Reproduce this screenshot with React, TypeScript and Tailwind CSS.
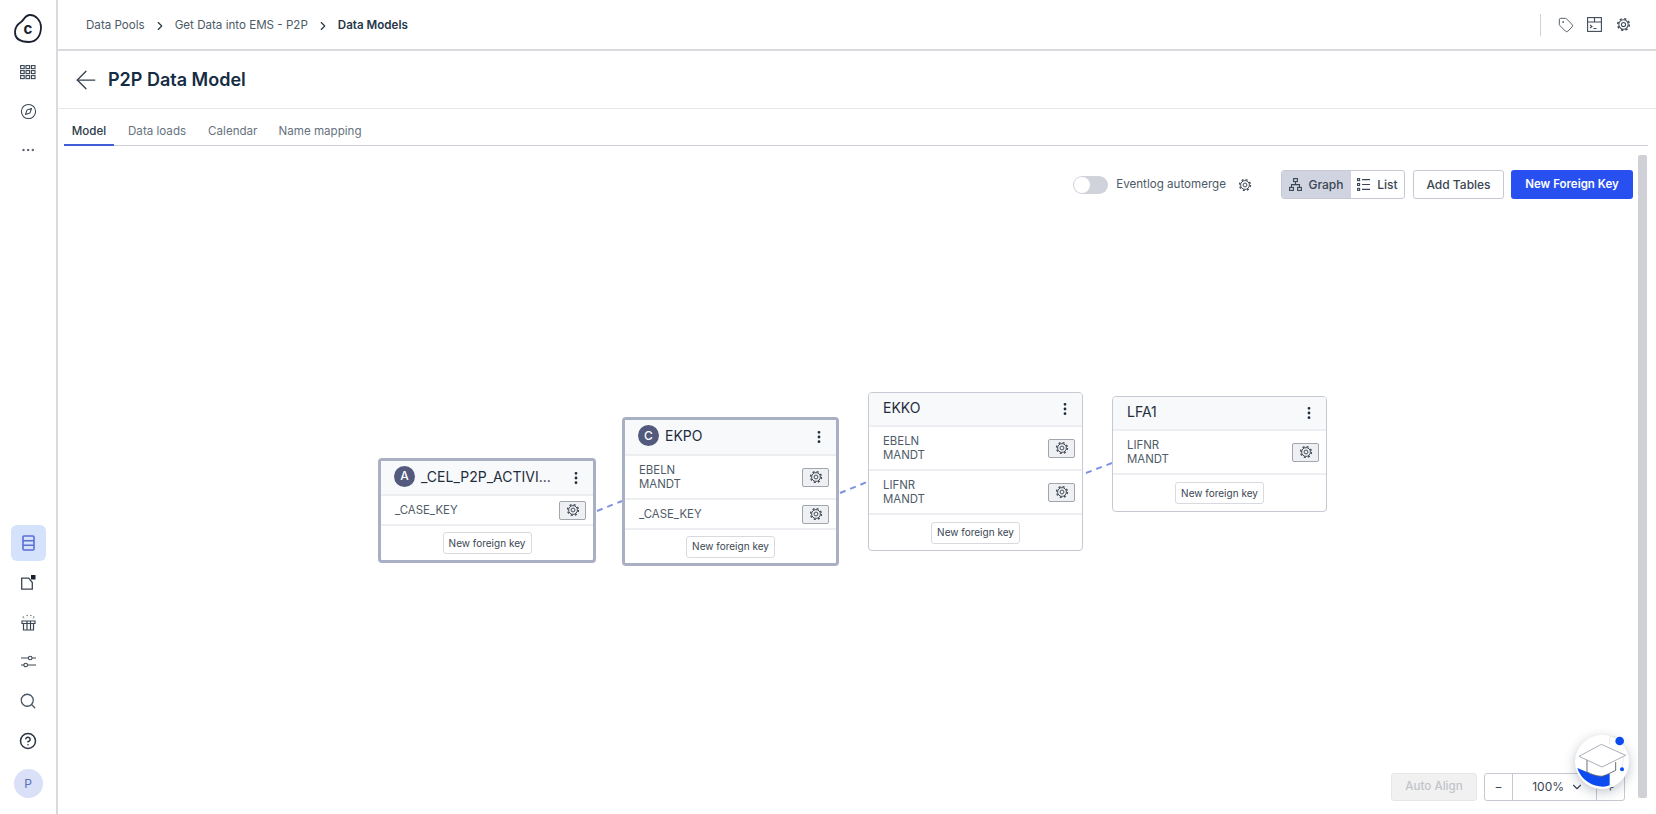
import React from 'react';
import { ArrowLeft, ChevronDown, ChevronRight, Compass, EllipsisVertical, Ellipsis, HelpCircle, Search, Tag } from 'lucide-react';

type NodeProps = {
  left: number;
  top: number;
  width: number;
  height: number;
  title: string;
  badge?: string;
  heavy?: boolean;
  headerH: number;
  rows: { keys: string[]; h: number }[];
};

function Gear({ size = 15, color = '#3f4a57' }: { size?: number; color?: string }) {
  return (
    <svg width={size} height={size} viewBox="0 0 16 16" fill="none" stroke={color}>
      <circle cx="8" cy="8" r="5" strokeWidth="1.1" />
      <circle cx="8" cy="8" r="6.2" strokeWidth="1.6" strokeDasharray="2.4 2.47" />
      <circle cx="8" cy="8" r="2.2" strokeWidth="1.1" />
    </svg>
  );
}

function TableNode({ left, top, width, height, title, badge, heavy, headerH, rows }: NodeProps) {
  return (
    <div
      className={`absolute flex flex-col bg-white overflow-hidden rounded-[4px] border-solid ${heavy ? 'border-[3px] border-[#aab0c4]' : 'border-[1.5px] border-[#c6c9d3]'}`}
      style={{ left, top, width, height }}
    >
      <div className="flex items-center bg-[#f8f9fb] border-b-2 border-[#eceef2] pl-[13px] pr-[9px] shrink-0" style={{ height: headerH }}>
        {badge && (
          <span className="w-[21px] h-[21px] rounded-full bg-[#535a7d] text-white text-[12px] font-medium flex items-center justify-center mr-[5px] mb-[3px] shrink-0">{badge}</span>
        )}
        <span className="flex-1 min-w-0 whitespace-nowrap text-[14px] text-[#1f2d3d] pl-[1px] mb-[3px]">{title}</span>
        <EllipsisVertical size={16} strokeWidth={2.2} className="text-[#1f2d3d] shrink-0" />
      </div>
      {rows.map((row) => (
        <div key={row.keys.join('-')} className="flex items-center justify-between border-b-2 border-[#eceef2] pl-[14px] pr-[7px] shrink-0" style={{ height: row.h }}>
          <div className="text-[11.4px] leading-[14px] text-[#4d5c68] mb-[1px]">
            {row.keys.map((k) => <div key={k}>{k}</div>)}
          </div>
          <div className="w-[27px] h-[19px] flex items-center justify-center bg-[#eff0f3] border border-[#a1a5ae] rounded-[2px]">
            <Gear size={14} />
          </div>
        </div>
      ))}
      <div className="flex-1 flex items-center justify-center">
        <div className="w-[89px] h-[22px] flex items-center justify-center border border-[#d8dae0] rounded-[3px] text-[10px] text-[#3a4653]">New foreign key</div>
      </div>
    </div>
  );
}

function Logo() {
  return (
    <svg width="30" height="32" viewBox="0 0 30 32" fill="none">
      <path d="M8 9 C11 7 12 2 17 2 C23 2 28 8 28 14 C28 22 24 29 16 29 C8 29 2 26 2 19 C2 14 5 11 8 9 Z" stroke="#1a2230" strokeWidth="1.8" />
      <text x="15" y="21" textAnchor="middle" fontSize="15" fontWeight="700" fill="#1a2230" fontFamily="Inter, sans-serif">c</text>
    </svg>
  );
}

function GridIcon() {
  const cells = [0, 1, 2, 3, 4, 5, 6, 7, 8];
  return (
    <svg width="16" height="15" viewBox="0 0 16 15" fill="none">
      {cells.map((i) => (
        <rect key={i} x={0.6 + (i % 3) * 5.4} y={0.6 + Math.floor(i / 3) * 5} width="3.6" height="3" stroke="#3a4653" strokeWidth="1.1" />
      ))}
    </svg>
  );
}

function TablesIcon() {
  return (
    <svg width="13" height="16" viewBox="0 0 13 16" fill="none" stroke="#5a6fd8" strokeWidth="1.6">
      <rect x="1" y="1" width="11" height="14" rx="1" />
      <path d="M1 5.7h11M1 10.3h11" />
    </svg>
  );
}

function ObjectIcon() {
  return (
    <svg width="15" height="15" viewBox="0 0 15 15" fill="none">
      <path d="M0.7 3.2h7l3.6 4.3v6.6H0.7z" stroke="#3a4653" strokeWidth="1.3" />
      <rect x="10" y="0" width="4.5" height="4.5" fill="#1a2230" />
    </svg>
  );
}

function GiftIcon() {
  return (
    <svg width="15" height="17" viewBox="0 0 15 17" fill="none" stroke="#3a4653" strokeWidth="1.2">
      <path d="M1 7h13v2.5H1zM2.5 9.5v6.5h10v-6.5M6 7v9M9.5 7v9" />
      <path d="M2 2.5l1 2M6 1l.5 2M10 1l-.5 2M13 2.5l-1 2" strokeDasharray="1 1" />
    </svg>
  );
}

function SlidersIcon() {
  return (
    <svg width="17" height="15" viewBox="0 0 17 15" fill="none" stroke="#3a4653" strokeWidth="1.1">
      <path d="M1 4h7.5M12 4h4M1 11h3M7.5 11h8.5" />
      <circle cx="10.2" cy="4" r="1.8" />
      <circle cx="5.7" cy="11" r="1.8" />
    </svg>
  );
}

function TerminalPanelIcon() {
  return (
    <svg width="15" height="15" viewBox="0 0 15 15" fill="none" stroke="#3f4a57" strokeWidth="1.1">
      <rect x="0.6" y="0.6" width="13.8" height="13.8" />
      <path d="M0.6 5h13.8M7.5 0.6V5M3 8l2 1.5L3 11M6.5 11.5h3" />
    </svg>
  );
}

function GraphIcon() {
  return (
    <svg width="13" height="13" viewBox="0 0 13 13" fill="none" stroke="#3a4653" strokeWidth="1.1">
      <rect x="4.6" y="0.6" width="3.8" height="3" />
      <rect x="0.6" y="9.4" width="3.8" height="3" />
      <rect x="8.6" y="9.4" width="3.8" height="3" />
      <path d="M6.5 3.6v3M2.5 9.4V6.6h8v2.8" />
    </svg>
  );
}

function ListIcon() {
  return (
    <svg width="13" height="13" viewBox="0 0 13 13" fill="none" stroke="#3a4653" strokeWidth="1.1">
      <rect x="0.6" y="0.6" width="2" height="2" />
      <rect x="0.6" y="5.5" width="2" height="2" />
      <rect x="0.6" y="10.4" width="2" height="2" />
      <path d="M5 1.6h8M5 6.5h8M5 11.4h8" />
    </svg>
  );
}

function Academy() {
  return (
    <div className="absolute right-[27px] bottom-[25px] w-[54px] h-[54px] rounded-full bg-white shadow-[0_3px_12px_rgba(30,40,70,0.28)]">
      <svg className="absolute left-0 top-0 overflow-visible" width="54" height="54" viewBox="0 0 162 162" fill="none">
        <path d="M7 99 L36 111 C 50 118 65 124 81 124 L104 116 L104 151 C 90 158 60 156 40 142 C 22 130 12 115 7 99Z" fill="#0b4bf0" />
        <path d="M36 74 L36 111 C 50 118 65 124 81 124 C 95 120 110 112 122 106 L122 81" stroke="#4a5260" strokeWidth="2.5" fill="#fff" />
        <path d="M79 28 L12 64 L81 96 L152 61 Z" stroke="#9a9ea6" strokeWidth="2.5" fill="#fff" />
        <path d="M141 103 L146 61" stroke="#b9bcc4" strokeWidth="2" strokeDasharray="3 3" />
        <path d="M104 28 V6 H122" stroke="#c8cad0" strokeWidth="2" strokeDasharray="3 3" />
        <circle cx="141" cy="103" r="6" fill="#0b4bf0" />
        <circle cx="134" cy="18" r="13" fill="#0b4bf0" />
      </svg>
    </div>
  );
}

const rail = 'w-[35px] h-[36px] flex items-center justify-center';

export default function App() {
  return (
    <div className="flex w-screen h-screen overflow-hidden bg-white text-[#1f2d3d] font-['Inter',sans-serif]">
      <aside className="w-[58px] shrink-0 border-r-2 border-[#d9dadd] bg-white flex flex-col items-center justify-between pt-[11px] pb-[16px]">
        <div className="flex flex-col items-center gap-[3px]">
          <div className={rail}><Logo /></div>
          <div className={`${rail} mt-[4px]`}><GridIcon /></div>
          <div className={rail}><Compass size={17} strokeWidth={1.5} className="text-[#3a4653]" /></div>
          <div className={rail}><Ellipsis size={16} strokeWidth={1.5} className="text-[#3a4653]" /></div>
        </div>
        <div className="flex flex-col items-center gap-[3.5px]">
          <div className={`${rail} rounded-[6px] bg-[#d4e3fb]`}><TablesIcon /></div>
          <div className={rail}><ObjectIcon /></div>
          <div className={rail}><GiftIcon /></div>
          <div className={rail}><SlidersIcon /></div>
          <div className={rail}><Search size={18} strokeWidth={1.7} className="text-[#4a5563]" /></div>
          <div className={rail}><HelpCircle size={18} strokeWidth={2} className="text-[#2b3542]" /></div>
          <div className="w-[29px] h-[29px] mt-[7px] rounded-full bg-[#d9e0f7] text-[#5a6fb8] text-[12px] flex items-center justify-center">P</div>
        </div>
      </aside>

      <main className="relative flex-1 min-w-0 flex flex-col">
        <header className="h-[51px] shrink-0 flex items-center justify-between border-b-2 border-[#d9dadd] pl-[28px] pr-[25px]">
          <nav className="flex items-center pt-[3px] text-[11.6px] text-[#4c5a67]">
            <span>Data Pools</span>
            <ChevronRight size={14} strokeWidth={2} className="mx-[8px] text-[#2b3542]" />
            <span>Get Data into EMS - P2P</span>
            <ChevronRight size={14} strokeWidth={2} className="mx-[8px] text-[#2b3542]" />
            <span className="font-semibold text-[#25384a]">Data Models</span>
          </nav>
          <div className="flex items-center">
            <div className="w-px h-[22px] bg-[#cfd1d6] mr-[17px]" />
            <Tag size={16} strokeWidth={1.3} className="text-[#3f4a57]" />
            <div className="ml-[13px]"><TerminalPanelIcon /></div>
            <div className="ml-[14px]"><Gear size={15} /></div>
          </div>
        </header>

        <div className="h-[58px] shrink-0 flex items-center border-b border-[#e6e7ea] pl-[13px]">
          <ArrowLeft size={30} strokeWidth={1} className="text-[#33404d]" />
          <h1 className="ml-[7px] text-[18px] font-semibold text-[#142c44]">P2P Data Model</h1>
        </div>

        <div className="h-[37px] shrink-0 flex items-stretch ml-[6px] mr-[8px] pt-[10px] border-b border-[#ccd0db] text-[11.6px] text-[#66727e]">
          <div className="relative w-[50px] flex items-center justify-center text-[#2c3a47] font-medium">
            Model
            <div className="absolute left-0 right-0 bottom-[-1px] h-[2px] bg-[#3d5ed6]" />
          </div>
          <div className="flex items-center ml-[14px]">Data loads</div>
          <div className="flex items-center ml-[22px]">Calendar</div>
          <div className="flex items-center ml-[21px]">Name mapping</div>
        </div>

        <div className="relative flex-1 min-h-0">
          <div className="flex items-center justify-end pt-[24px] pr-[23px]">
            <div className="relative w-[35px] h-[18px] rounded-full bg-[#d0d2dc]">
              <div className="absolute left-[1px] top-[1px] w-[16px] h-[16px] rounded-full bg-white" />
            </div>
            <span className="ml-[8px] pt-[1px] text-[11.6px] text-[#4c5a67]">Eventlog automerge</span>
            <div className="ml-[12px]"><Gear size={14} /></div>
            <div className="ml-[29px] flex h-[29px] w-[124px] rounded-[3px] border border-[#c6c9d3] overflow-hidden text-[12px] font-medium text-[#3a4653]">
              <div className="w-[69px] bg-[#d0d3e0] flex items-center justify-center gap-[6px]">
                <GraphIcon />Graph
              </div>
              <div className="flex-1 flex items-center justify-center gap-[7px]"><ListIcon />List</div>
            </div>
            <div className="ml-[8px] w-[91px] h-[29px] rounded-[3px] border border-[#c6c9d3] flex items-center justify-center text-[12px] font-medium text-[#3a4653]">Add Tables</div>
            <div className="ml-[7px] w-[122px] h-[29px] rounded-[3px] bg-[#2850f0] flex items-center justify-center text-[11.5px] font-semibold text-white">New Foreign Key</div>
          </div>

          <svg className="absolute left-0 top-0 pointer-events-none" width="1598" height="668" fill="none" stroke="#7f93e3" strokeWidth="2" strokeDasharray="6 5">
            <path d="M539 365 L564 355" />
            <path d="M782 347 L809 336" />
            <path d="M1028 327 L1054 317" />
          </svg>

          <TableNode left={320} top={312} width={218} height={105} heavy badge="A" title="_CEL_P2P_ACTIVI..." headerH={35} rows={[{ keys: ['_CASE_KEY'], h: 30 }]} />
          <TableNode left={564} top={271} width={217} height={149} heavy badge="C" title="EKPO" headerH={36} rows={[{ keys: ['EBELN', 'MANDT'], h: 44 }, { keys: ['_CASE_KEY'], h: 30 }]} />
          <TableNode left={810} top={246} width={215} height={159} title="EKKO" headerH={34} rows={[{ keys: ['EBELN', 'MANDT'], h: 44 }, { keys: ['LIFNR', 'MANDT'], h: 44 }]} />
          <TableNode left={1054} top={250} width={215} height={116} title="LFA1" headerH={34} rows={[{ keys: ['LIFNR', 'MANDT'], h: 44 }]} />

          <div className="absolute right-[9px] top-[9px] bottom-[16px] w-[9px] bg-[#cfd1d6] rounded-[2px]" />

          <div className="absolute left-[1333px] bottom-[13px] flex items-center">
            <div className="w-[86px] h-[28px] rounded-[3px] bg-[#f1f1f2] border border-[#e6e6e8] flex items-center justify-center text-[11.6px] font-medium text-[#c2c4c8]">Auto Align</div>
            <div className="ml-[7px] w-[141px] h-[28px] rounded-[3px] border border-[#c6c9d3] flex items-stretch text-[12px] text-[#3a4653]">
              <div className="w-[28px] border-r border-[#c6c9d3] flex items-center justify-center">−</div>
              <div className="w-[84px] border-r border-[#c6c9d3] flex items-center justify-end pr-[12px] gap-[6px]">100%<ChevronDown size={14} strokeWidth={2} /></div>
              <div className="flex-1 flex items-center justify-center">+</div>
            </div>
          </div>
        </div>

        <Academy />
      </main>
    </div>
  );
}
